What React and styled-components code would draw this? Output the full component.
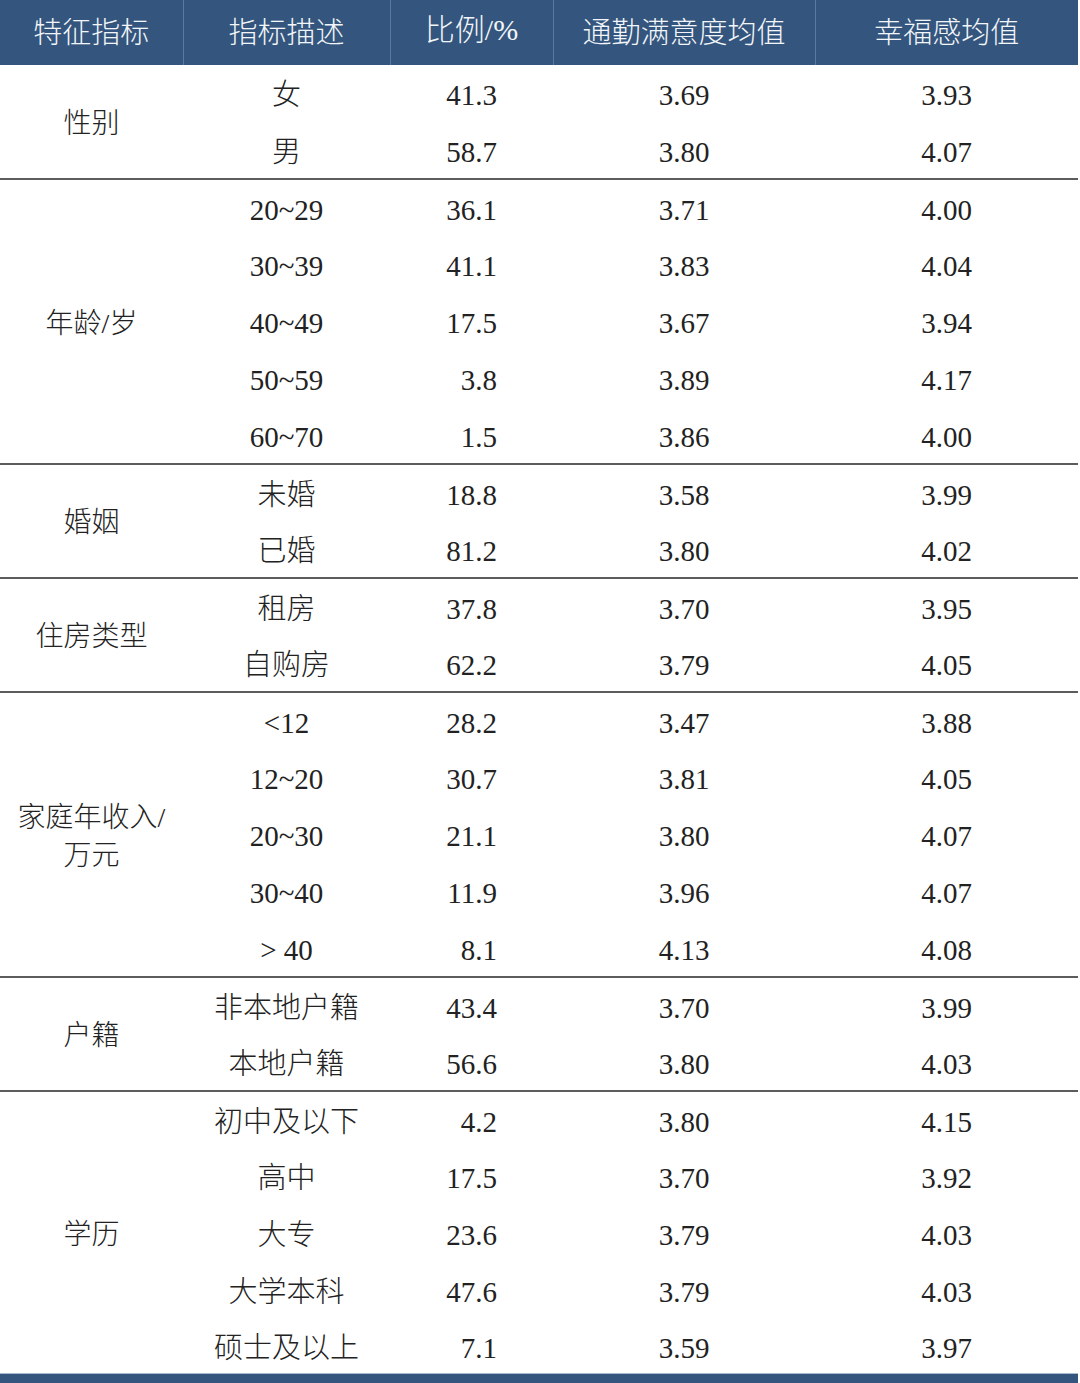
import React from 'react';
import styled, {createGlobalStyle} from 'styled-components';

const groups = [
	{
		name: '性别',
		rows: [
			['女', '41.3', '3.69', '3.93'],
			['男', '58.7', '3.80', '4.07'],
		],
	},
	{
		name: '年龄/岁',
		rows: [
			['20~29', '36.1', '3.71', '4.00'],
			['30~39', '41.1', '3.83', '4.04'],
			['40~49', '17.5', '3.67', '3.94'],
			['50~59', '3.8', '3.89', '4.17'],
			['60~70', '1.5', '3.86', '4.00'],
		],
	},
	{
		name: '婚姻',
		rows: [
			['未婚', '18.8', '3.58', '3.99'],
			['已婚', '81.2', '3.80', '4.02'],
		],
	},
	{
		name: '住房类型',
		rows: [
			['租房', '37.8', '3.70', '3.95'],
			['自购房', '62.2', '3.79', '4.05'],
		],
	},
	{
		name: (
			<>
				家庭年收入/
				<br />
				万元
			</>
		),
		rows: [
			['<12', '28.2', '3.47', '3.88'],
			['12~20', '30.7', '3.81', '4.05'],
			['20~30', '21.1', '3.80', '4.07'],
			['30~40', '11.9', '3.96', '4.07'],
			['> 40', '8.1', '4.13', '4.08'],
		],
	},
	{
		name: '户籍',
		rows: [
			['非本地户籍', '43.4', '3.70', '3.99'],
			['本地户籍', '56.6', '3.80', '4.03'],
		],
	},
	{
		name: '学历',
		rows: [
			['初中及以下', '4.2', '3.80', '4.15'],
			['高中', '17.5', '3.70', '3.92'],
			['大专', '23.6', '3.79', '4.03'],
			['大学本科', '47.6', '3.79', '4.03'],
			['硕士及以上', '7.1', '3.59', '3.97'],
		],
	},
];

const headers = ['特征指标', '指标描述', '比例/%', '通勤满意度均值', '幸福感均值'];
const widths = [183, 207, 163, 262, 263];

const App = () => {
	return (
		<Page>
			<GlobalStyle />
			<Table>
				<colgroup>
					{widths.map((w, i) => (
						<col key={i} style={{width: w}} />
					))}
				</colgroup>
				<thead>
					<tr>
						{headers.map((h, i) => (
							<HeadCell key={i} $first={i === 0}>
								{h}
							</HeadCell>
						))}
					</tr>
				</thead>
				{groups.map((g, gi) => (
					<tbody key={gi}>
						{g.rows.map((r, ri) => {
							const last = gi === groups.length - 1 && ri === g.rows.length - 1;
							return (
								<Row key={ri} $sep={gi > 0 && ri === 0} $short={last}>
									{ri === 0 && <NameCell rowSpan={g.rows.length}>{g.name}</NameCell>}
									<Cell>{r[0]}</Cell>
									<RatioCell>{r[1]}</RatioCell>
									<Cell>{r[2]}</Cell>
									<Cell>{r[3]}</Cell>
								</Row>
							);
						})}
					</tbody>
				))}
			</Table>
			<BottomBar />
		</Page>
	);
};

export default App;

const GlobalStyle = createGlobalStyle`
	html, body {
		margin: 0;
		padding: 0;
		background: #ffffff;
	}
	body {
		font-family: "Liberation Serif", "Noto Sans CJK SC", serif;
		font-weight: 300;
		color: #222222;
	}
`;

const Page = styled.div`
	width: 1080px;
	height: 1383px;
	overflow: hidden;
	background: #ffffff;
`;

const Table = styled.table`
	width: 1078px;
	border-collapse: collapse;
	table-layout: fixed;
	font-size: 29px;
`;

const HeadCell = styled.th`
	height: 60px;
	padding: 0 0 5px;
	background: #34557d;
	color: #f2f5f9;
	font-weight: 300;
	font-family: "Noto Sans CJK SC", sans-serif;
	font-size: 29px;
	line-height: 1;
	text-align: center;
	vertical-align: middle;
	border-left: ${(p) => (p.$first ? 'none' : '1px solid #5b78a0')};
	white-space: nowrap;

	&:nth-child(3) {
		font-family: "Liberation Serif", "Noto Sans CJK SC", serif;
		font-size: 30px;
	}
`;

const Row = styled.tr`
	height: ${(p) => (p.$short ? '54px' : '57px')};
	border-top: ${(p) => (p.$sep ? '2px solid #5c5c5c' : 'none')};
`;

const Cell = styled.td`
	padding: 4px 0 0;
	text-align: center;
	vertical-align: middle;
	white-space: nowrap;
	line-height: 1;
`;

const NameCell = styled(Cell)`
	line-height: 38px;
	font-size: 28px;
`;

const RatioCell = styled(Cell)`
	text-align: right;
	padding-right: 56px;
`;

const BottomBar = styled.div`
	width: 1078px;
	height: 11px;
	background: #34557d;
	border-top: 1px solid #a9bccf;
`;
